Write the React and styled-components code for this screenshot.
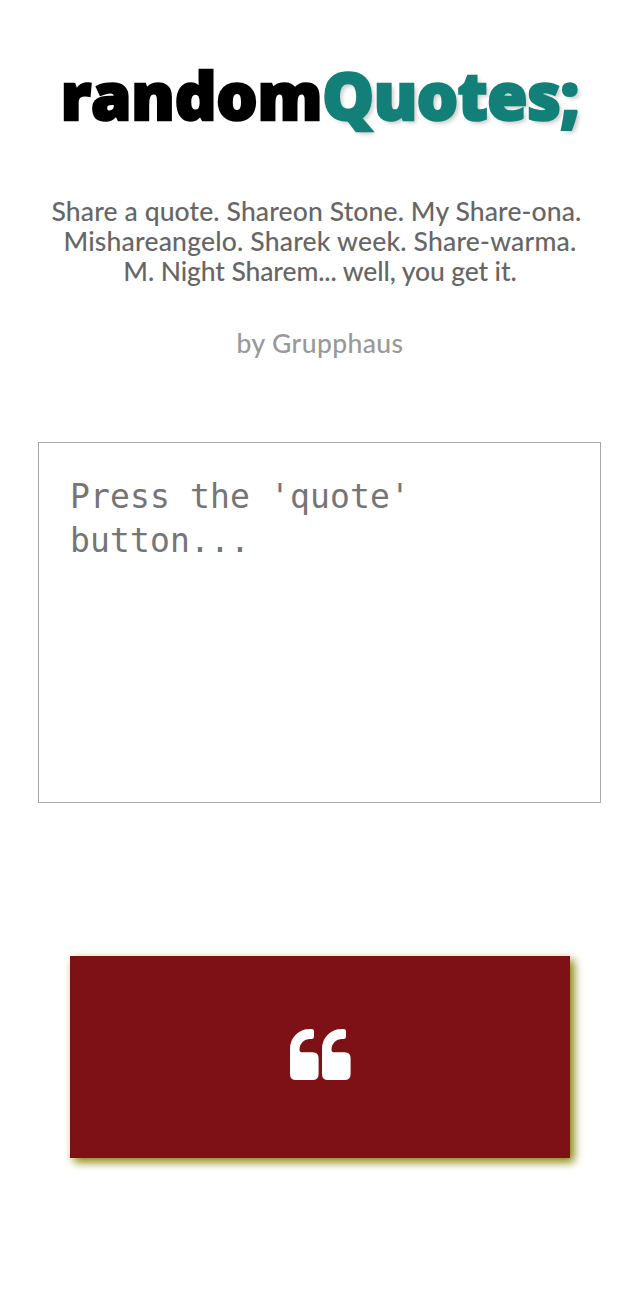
import React from "react";
import styled, { createGlobalStyle } from "styled-components";

const Global = createGlobalStyle`
  * { box-sizing: border-box; }
  body { margin: 0; background: #fff; overflow-x: hidden; }
`;
const Page = styled.main`
  width: 640px;
  height: 1294px;
  display: flex;
  flex-direction: column;
  align-items: center;
`;
const Title = styled.h1`
  margin: 50px 0 0;
  height: 87px;
  display: flex;
  justify-content: center;
  font: 800 65px/90px "Open Sans", sans-serif;
  white-space: nowrap;
`;
const Word = styled.span`
  display: block;
  color: ${(p) => p.$color};
  letter-spacing: ${(p) => p.$spacing};
  -webkit-text-stroke: 2.5px ${(p) => p.$color};
  text-shadow: ${(p) => (p.$raised ? "3px 3px 4px rgba(0,0,0,.22)" : "none")};
`;
const Tagline = styled.p`
  margin: 59px 0 0;
  font: 500 26.5px/30px Lato, sans-serif;
  color: #666;
`;
const Line = styled.span`
  display: block;
  white-space: nowrap;
  text-align: center;
  letter-spacing: ${(p) => p.$spacing};
  padding-right: ${(p) => p.$trail || "0"};
`;
const Author = styled.p`
  margin: 42px 0 0;
  font: 500 26.5px/30px Lato, sans-serif;
  color: #999;
`;
const QuoteBox = styled.textarea`
  margin: 84px 1px 0 0;
  width: 563px;
  height: 361px;
  padding: 32px 31px;
  border: 1px solid #a9a9a9;
  border-radius: 0;
  resize: none;
  outline: none;
  font: 33px/44px "DejaVu Sans Mono", monospace;
  letter-spacing: 0.13px;
  &::placeholder { color: #757575; }
`;
const QuoteButton = styled.button`
  margin: 153px 0 0;
  width: 500px;
  height: 202px;
  display: flex;
  align-items: center;
  justify-content: center;
  padding: 0 0 5px;
  border: 0;
  background: #7e1116;
  box-shadow: 4px 4px 9px olive;
`;
const QuoteIcon = styled.svg`
  display: block;
  width: 61px;
  height: 51px;
  fill: #fff;
`;
const mark = "M0 19.5A19.5 19.5 0 0 1 19.5 0H21.7Q24 0 24 2.3V7.7Q24 10 21.7 10H19.5A10 10 0 0 0 9.5 20V21Q9.5 23.3 12.5 23.3H22.6Q28.6 23.3 28.6 29.3V45Q28.6 51 22.6 51H6Q0 51 0 45Z";

export default function App() {
  return (
    <Page>
      <Global />
      <Title>
        <Word $color="#000" $spacing="-0.2px">random</Word>
        <Word $color="#128078" $spacing="-0.4px" $raised>Quotes;</Word>
      </Title>
      <Tagline>
        <Line $spacing="0.13px" $trail="7px">Share a quote. Shareon Stone. My Share-ona.</Line>
        <Line $spacing="0.2px">Mishareangelo. Sharek week. Share-warma.</Line>
        <Line $spacing="-0.1px">M. Night Sharem... well, you get it.</Line>
      </Tagline>
      <Author><Line $spacing="0.4px">by Grupphaus</Line></Author>
      <QuoteBox placeholder="Press the 'quote' button..." />
      <QuoteButton aria-label="quote">
        <QuoteIcon viewBox="0 0 61 51">
          <path d={mark} />
          <path d={mark} transform="translate(32 0)" />
        </QuoteIcon>
      </QuoteButton>
    </Page>
  );
}
